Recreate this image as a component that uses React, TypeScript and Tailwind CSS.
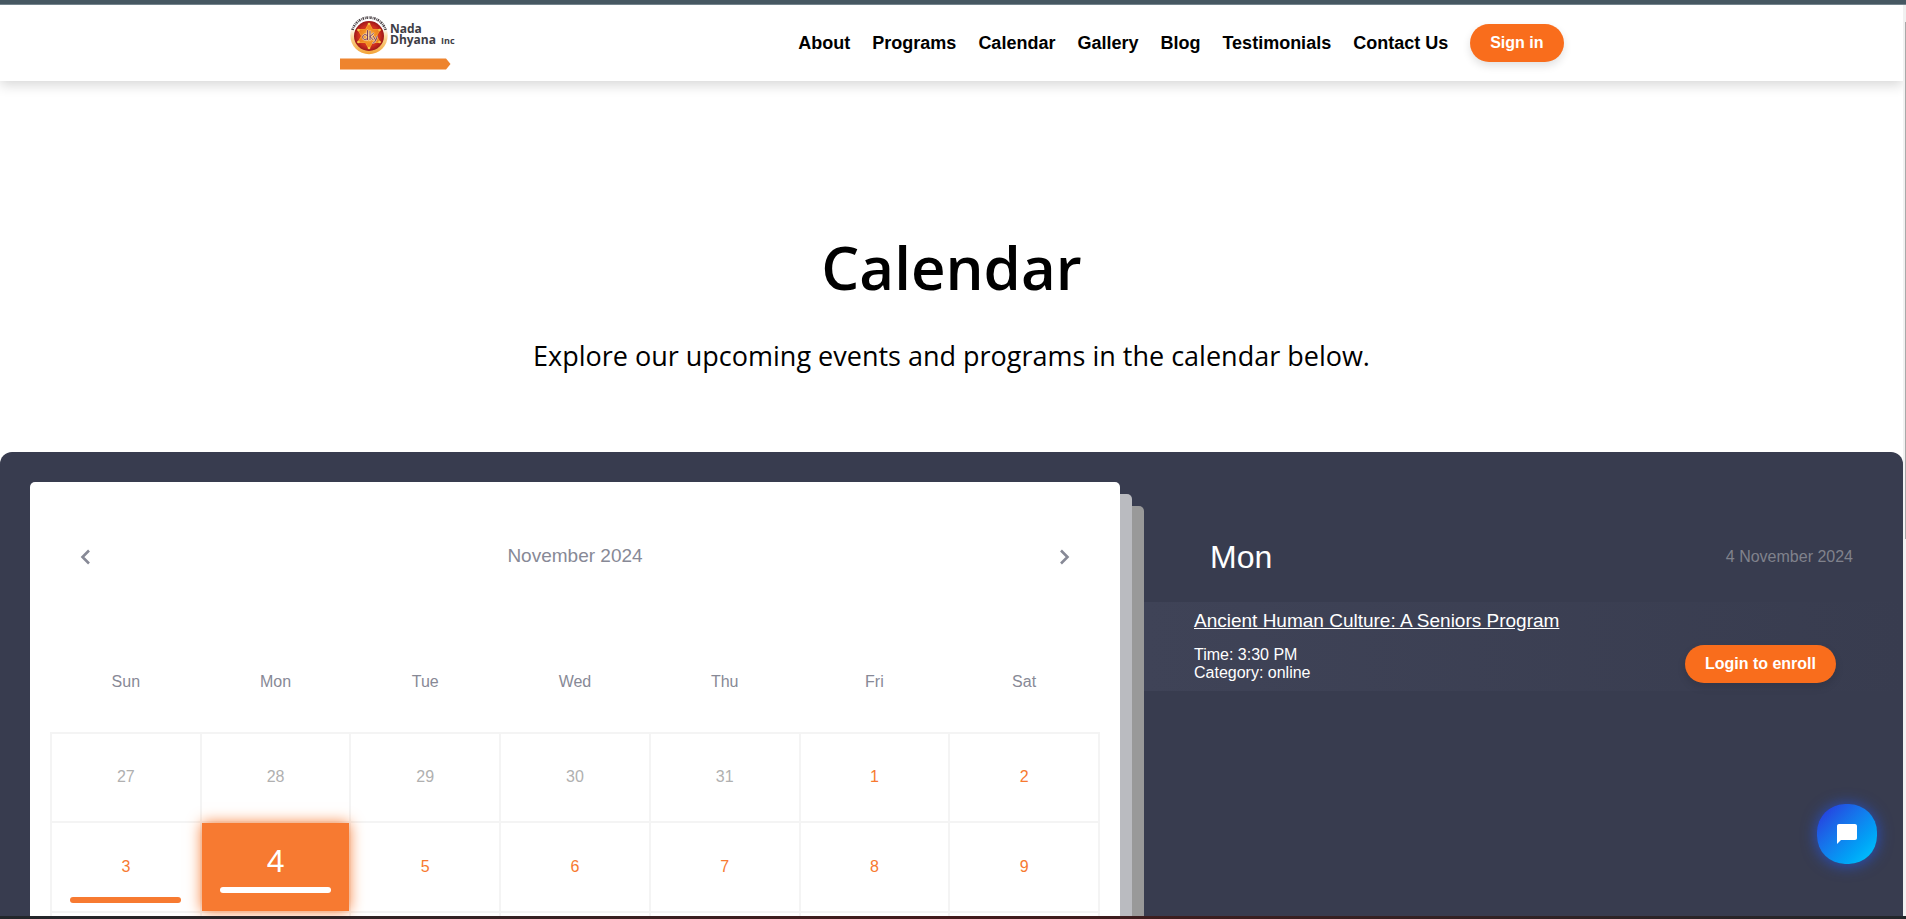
import { MdChatBubble } from "react-icons/md";

type Day = { day: number; outside?: boolean; selected?: boolean; hasEvent?: boolean };

const navLinks = ["About", "Programs", "Calendar", "Gallery", "Blog", "Testimonials", "Contact Us"];
const weekdays = ["Sun", "Mon", "Tue", "Wed", "Thu", "Fri", "Sat"];
const weeks: Day[][] = [
  [
    { day: 27, outside: true },
    { day: 28, outside: true },
    { day: 29, outside: true },
    { day: 30, outside: true },
    { day: 31, outside: true },
    { day: 1 },
    { day: 2 },
  ],
  [
    { day: 3, hasEvent: true },
    { day: 4, hasEvent: true, selected: true },
    { day: 5 },
    { day: 6 },
    { day: 7 },
    { day: 8 },
    { day: 9 },
  ],
];

function Logo() {
  return (
    <a href="#home" className="block" aria-label="Nada Dhyana Inc">
      <svg width="120" height="56" viewBox="0 0 120 56" className="block font-['Open_Sans',sans-serif] font-bold">
        <defs>
          <radialGradient id="disc" cx="50%" cy="50%" r="50%">
            <stop offset="0" stopColor="#e2601f" />
            <stop offset="0.7" stopColor="#cf2f1e" />
            <stop offset="1" stopColor="#9c1719" />
          </radialGradient>
          <radialGradient id="star" cx="50%" cy="50%" r="50%">
            <stop offset="0" stopColor="#fbd08a" />
            <stop offset="0.5" stopColor="#f39325" />
            <stop offset="1" stopColor="#ec7a1f" />
          </radialGradient>
          <linearGradient id="rim" x1="0" y1="0" x2="0" y2="1">
            <stop offset="0.3" stopColor="#fff" />
            <stop offset="0.6" stopColor="#f9cf86" />
            <stop offset="1" stopColor="#f3a437" />
          </linearGradient>
        </defs>
        <circle cx="29" cy="20.500" r="18.700" fill="url(#rim)" />
        <path
          d="M12.400 15 A17.300 17.300 0 0 1 45.600 15"
          fill="none"
          stroke="#4a4246"
          strokeWidth="2.600"
          strokeDasharray="1.500 0.900 0.800 0.700"
        />
        <circle cx="29" cy="21" r="15" fill="url(#disc)" />
        <path
          d="M29 8 L32.600 14.500 L40.300 14.500 L36.500 21 L40.300 27.500 L32.600 27.500 L29 34 L25.400 27.500 L17.700 27.500 L21.500 21 L17.700 14.500 L25.400 14.500 Z"
          fill="url(#star)"
          stroke="#f8a82e"
          strokeWidth="0.800"
        />
        <g fill="#f8c64a">
          <circle cx="29" cy="9" r="1.300" />
          <circle cx="39.500" cy="15" r="1.300" />
          <circle cx="39.500" cy="27" r="1.300" />
          <circle cx="29" cy="33" r="1.300" />
          <circle cx="18.500" cy="27" r="1.300" />
          <circle cx="18.500" cy="15" r="1.300" />
        </g>
        <g fill="none" strokeLinecap="round" strokeLinejoin="round">
          <path
            d="M27.500 15.500v9.200M27.500 20.800a2.600 2.600 0 1 0 0 2.600M30 16.500v8.200M33.400 18.500 30 21.500l3 3.200M33.500 21.500l1.700 3M37 21.500c-1 4-2 6-4 6.500"
            stroke="#fff"
            strokeWidth="1.900"
            opacity="0.600"
          />
          <path
            d="M27.500 15.500v9.200M27.500 20.800a2.600 2.600 0 1 0 0 2.600M30 16.500v8.200M33.400 18.500 30 21.500l3 3.200M33.500 21.500l1.700 3M37 21.500c-1 4-2 6-4 6.500"
            stroke="#6c3150"
            strokeWidth="0.900"
          />
        </g>
        <text x="50" y="18" fontSize="12" fill="#3d3d45">Nada</text>
        <text x="50" y="29" fontSize="12" fill="#3d3d45">Dhyana</text>
        <text x="101" y="29" fontSize="9" fill="#3d3d45">Inc</text>
        <path d="M0 43.500h106l4.500 5.500-4.500 5.500H0z" fill="#ee842e" />
      </svg>
    </a>
  );
}

function Chevron({ direction }: { direction: "left" | "right" }) {
  return (
    <button
      type="button"
      aria-label={direction === "left" ? "Previous month" : "Next month"}
      className="flex size-8 items-center justify-center text-[#878996]"
    >
      <svg width="12" height="16" viewBox="0 0 12 16" fill="none" stroke="currentColor" strokeWidth="2.600">
        <path d={direction === "left" ? "M9 1.500 2.500 8 9 14.500" : "M3 1.500 9.500 8 3 14.500"} />
      </svg>
    </button>
  );
}

function DayCell({ day, outside, selected, hasEvent }: Day) {
  if (selected) {
    return (
      <button
        type="button"
        aria-pressed="true"
        className="relative flex h-[88px] w-full flex-col items-center bg-[#f77a31] pt-5 text-[32px] leading-9 text-white shadow-[0_0_14px_#f77a31]"
      >
        {day}
        <span className="mt-2 h-[6px] w-3/4 rounded-full bg-white" />
      </button>
    );
  }
  return (
    <button
      type="button"
      className={`flex h-[87px] w-full flex-col items-center pt-[33px] text-base leading-5 ${outside ? "text-[#b0b0b0]" : "text-[#f77a31]"}`}
    >
      {day}
      {hasEvent && <span className="mt-5 h-[6px] w-3/4 rounded-full bg-[#f77a31]" />}
    </button>
  );
}

function ActionButton({ children }: { children: string }) {
  return (
    <button
      type="button"
      className="h-[38px] rounded-full bg-[#f96d1c] px-5 text-base font-bold text-white shadow-[0_4px_8px_rgba(0,0,0,0.12)]"
    >
      {children}
    </button>
  );
}

export default function App() {
  return (
    <div className="flex h-screen flex-col overflow-hidden bg-white font-['Liberation_Sans',Arial,sans-serif]">
      <div className="h-[5px] shrink-0 border-b border-[#74848d] bg-[#465862]" />

      <div className="flex min-h-0 flex-1">
        <div className="min-w-0 flex-1 overflow-x-hidden overflow-y-auto [scrollbar-width:none]">
          <header className="relative bg-white shadow-[0_4px_12px_rgba(0,0,0,0.16)]">
            <div className="mx-auto flex h-[76px] max-w-[1224px] items-center justify-between">
              <Logo />
              <nav className="flex items-center gap-[22px] text-lg font-bold text-black">
                {navLinks.map((label) => (
                  <a key={label} href={`#${label}`}>
                    {label}
                  </a>
                ))}
                <ActionButton>Sign in</ActionButton>
              </nav>
            </div>
          </header>

          <main>
            <section className="flex flex-col items-center pt-[146px] pb-[76px] text-center font-['Open_Sans',sans-serif] text-black">
              <h1 className="text-[60px] leading-20 font-semibold">Calendar</h1>
              <p className="mt-[29px] text-[27px] leading-10">Explore our upcoming events and programs in the calendar below.</p>
            </section>

            <section className="grid grid-cols-[1090fr_783fr] rounded-xl bg-[#383c4f] pt-[30px] pl-[30px]">
              <div className="min-w-0 rounded-[5px] bg-white px-5 pb-10 shadow-[12px_12px_0_0_#babbc0,24px_24px_0_0_#999999]">
                <div className="flex h-[149px] items-center justify-between px-5">
                  <Chevron direction="left" />
                  <h2 className="text-[19px] text-[#878996]">November 2024</h2>
                  <Chevron direction="right" />
                </div>
                <table className="w-full table-fixed border-collapse">
                  <thead>
                    <tr>
                      {weekdays.map((name) => (
                        <th key={name} scope="col" className="h-[102px] text-base font-normal text-[#878996]">
                          {name}
                        </th>
                      ))}
                    </tr>
                  </thead>
                  <tbody>
                    {weeks.map((week) => (
                      <tr key={week[0].day}>
                        {week.map((item) => (
                          <td key={item.day} className="border-2 border-[#f4f4f4] p-0">
                            <DayCell {...item} />
                          </td>
                        ))}
                      </tr>
                    ))}
                    <tr>
                      {weekdays.map((name) => (
                        <td key={name} className="h-[89px] border-2 border-[#f4f4f4] p-0" />
                      ))}
                    </tr>
                  </tbody>
                </table>
              </div>

              <aside className="min-w-0 pl-6 text-white">
                <div className="mt-12 flex h-[54px] items-center justify-between pr-[50px] pl-[66px]">
                  <h2 className="text-[32px]">Mon</h2>
                  <p className="text-base text-[#80828c]">4 November 2024</p>
                </div>
                <article className="mt-[18px] bg-linear-to-r from-[#3f4357] to-[#383c4f] pt-2 pr-[67px] pb-2 pl-[50px]">
                  <a href="#program" className="text-[19px] leading-[22px] underline">
                    Ancient Human Culture: A Seniors Program
                  </a>
                  <div className="mt-[11px] flex items-center justify-between">
                    <div className="text-base leading-[18px]">
                      <p>Time: 3:30 PM</p>
                      <p>Category: online</p>
                    </div>
                    <ActionButton>Login to enroll</ActionButton>
                  </div>
                </article>
              </aside>
            </section>
          </main>
        </div>

        <div className="flex w-[3px] shrink-0 justify-end bg-[#f1f1f1] pt-[17px]">
          <div className="h-[517px] w-px bg-[#a9a9a9]" />
        </div>
      </div>

      <div className="h-[3px] shrink-0 bg-linear-to-r from-[#22262a] via-[#431a1b] to-[#22262a]" />

      <button
        type="button"
        aria-label="Open chat"
        className="fixed right-[29px] bottom-[55px] flex size-[60px] items-center justify-center rounded-[28px] bg-linear-135 from-[#2a27da] to-[#00ccff] text-white shadow-[0_1px_15px_rgba(32,90,254,0.7)]"
      >
        <MdChatBubble size={24} />
      </button>
    </div>
  );
}
